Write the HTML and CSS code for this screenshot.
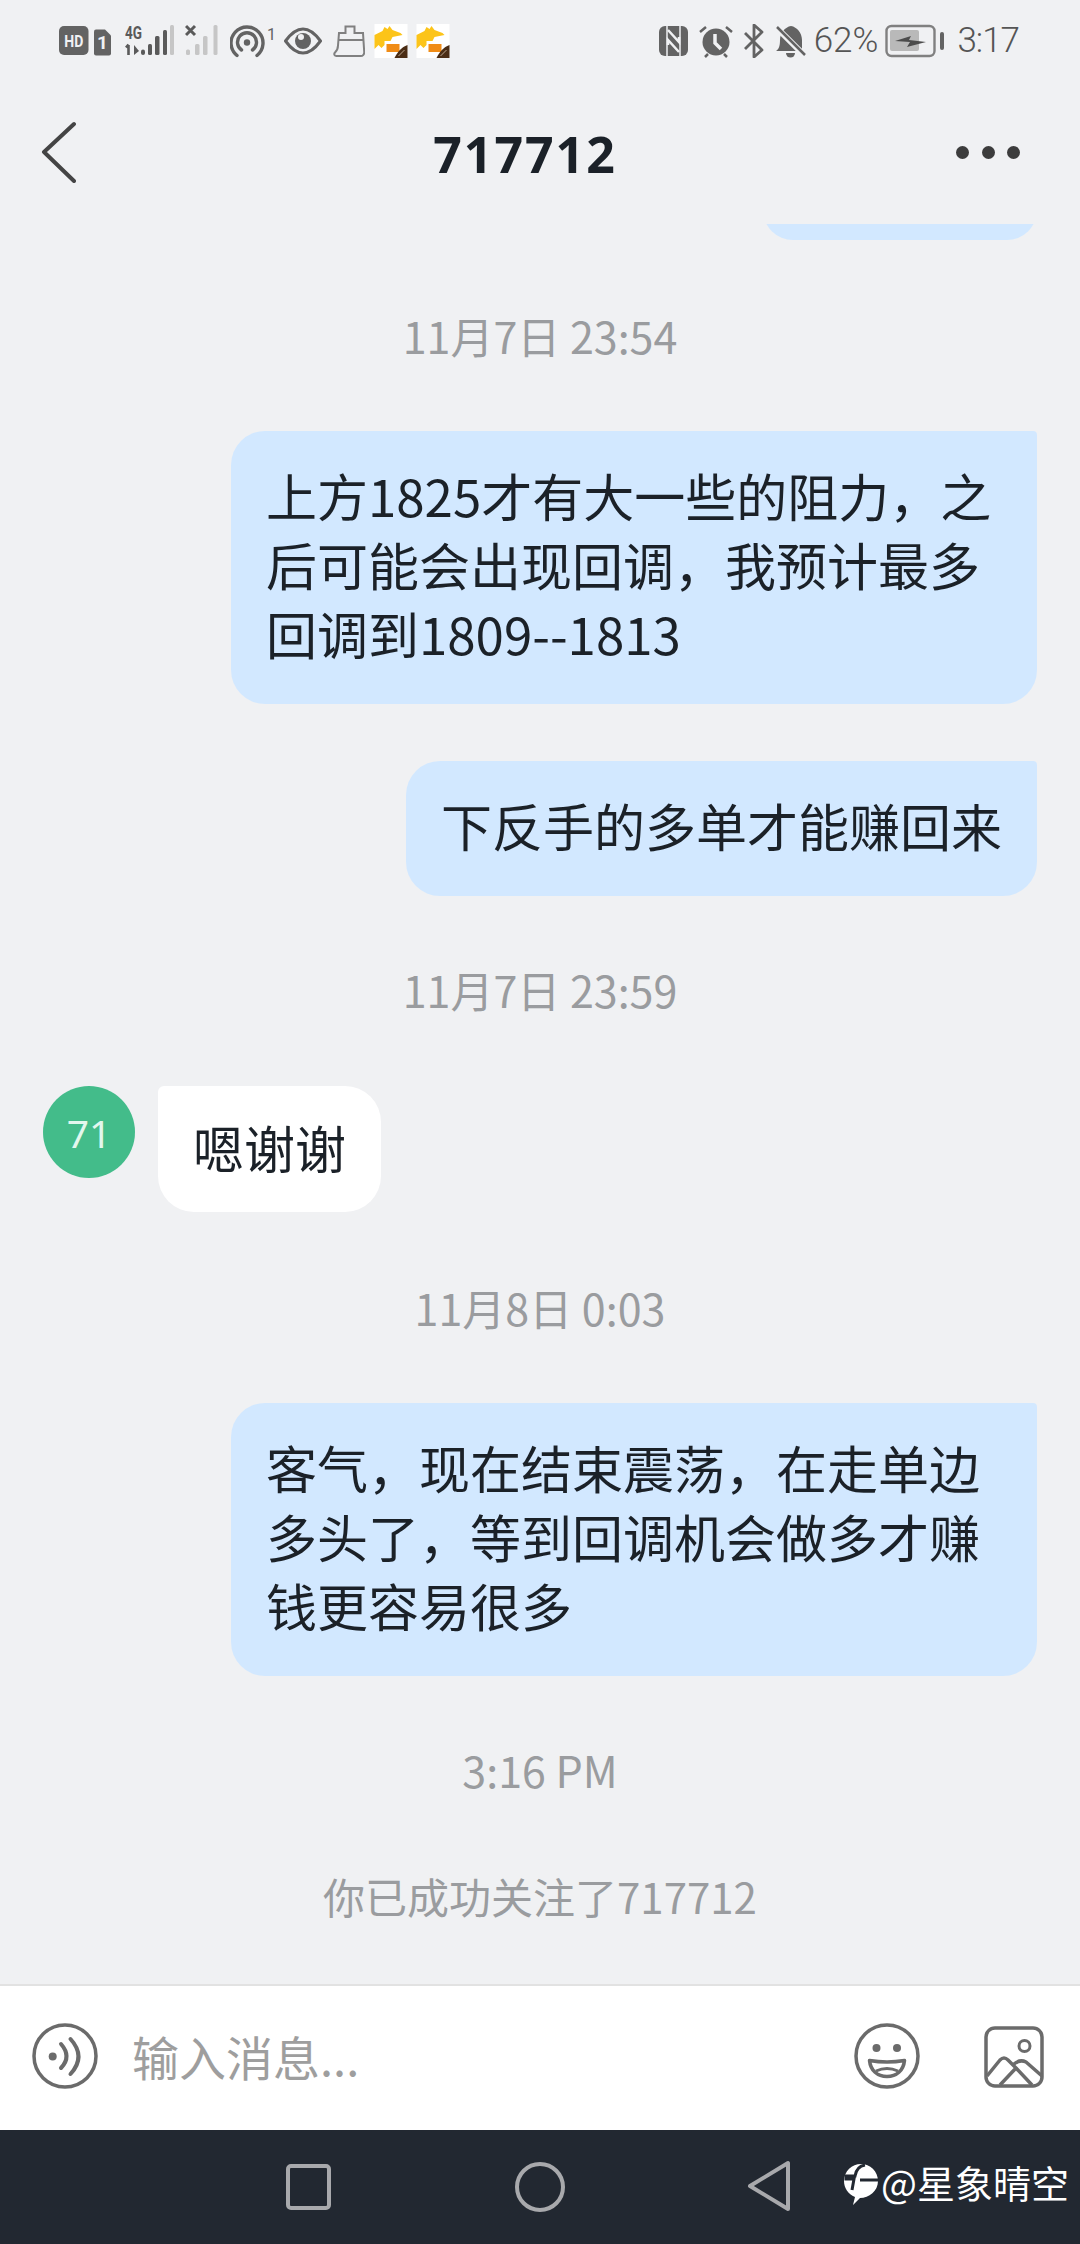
FILE: index.html
```html
<!DOCTYPE html>
<html>
<head>
	<meta charset="utf-8">
	<title>717712</title>
	<link rel="stylesheet" href="styles.css">
</head>
<body>
<div class="phone">

	<div class="status">
		<div class="status-left">
			<svg class="ic" width="52" height="34" viewBox="0 0 52 34"><rect x="0" y="2" width="29.500" height="29" rx="5" fill="#636363"/><text x="14.800" y="22.500" class="hd" textLength="19" lengthAdjust="spacingAndGlyphs">HD</text><path d="M37 5.500h9l6 6v18a2 2 0 0 1-2 2H37a2 2 0 0 1-2-2v-22a2 2 0 0 1 2-2z" fill="#636363"/><text x="43.500" y="25" class="sim">1</text></svg>
			<svg class="ic gap1" width="49" height="42" viewBox="0 -8 49 42"><text x="0" y="15" class="net" textLength="17" lengthAdjust="spacingAndGlyphs">4G</text><path d="M3.500 31V21M1 23.500l2.500-3" stroke="#5a5a5a" stroke-width="2.600" fill="none"/><path d="M9 21v10l5-4z" fill="#5a5a5a"/><g fill="#5a5a5a"><rect x="16" y="25.500" width="4" height="5.500" rx="2"/><rect x="23" y="20" width="4" height="11" rx="1.500"/><rect x="30" y="12" width="4.500" height="19" rx="1.500"/><rect x="38" y="6" width="4" height="25" rx="1.500"/></g><rect x="45" y="1" width="4" height="30" rx="1.500" fill="#c6c6c6"/></svg>
			<svg class="ic gap2" width="33" height="34" viewBox="0 0 33 34"><path d="M1 2l9 9M10 2l-9 9" stroke="#5a5a5a" stroke-width="3"/><g fill="#c6c6c6"><rect x="1" y="25.500" width="4" height="5.500" rx="1.500"/><rect x="10" y="20" width="4.500" height="11" rx="1.500"/><rect x="18" y="12" width="4.500" height="19" rx="1.500"/><rect x="28.500" y="1" width="4" height="30" rx="1.500"/></g></svg>
			<svg class="ic gap3" width="49" height="34" viewBox="0 0 49 34"><g fill="none" stroke="#636363" stroke-width="3.400" stroke-linecap="round"><path d="M7 31.500a16 16 0 1 1 20 0"/><path d="M11.500 26a9.500 9.500 0 1 1 11 0"/></g><circle cx="17" cy="18.500" r="3.200" fill="#636363"/><text x="37" y="16" class="tiny">1</text></svg>
			<svg class="ic gap0" width="38" height="28" viewBox="0 0 38 28"><path d="M1.500 14C8 5 13 2 19 2s11 3 17.500 12C30 23 25 26 19 26S8 23 1.500 14z" fill="none" stroke="#636363" stroke-width="3"/><circle cx="19" cy="14" r="8" fill="#636363"/><circle cx="17" cy="10" r="3" fill="#f0f1f3"/></svg>
			<svg class="ic gap4" width="32" height="34" viewBox="0 0 32 34"><path d="M6 9h6.500V2.500h9V9H30l1.200 19a3.500 3.500 0 0 1-3.500 4H3.500c-2 0-3-2-1.500-3.500 2-2 3-4 3-7zM5.500 16h25" fill="none" stroke="#808080" stroke-width="2"/></svg>
			<svg class="ic gap5" width="34" height="34" viewBox="0 0 33 34"><use href="#roo"/></svg>
			<svg class="ic gap6" width="34" height="34" viewBox="0 0 33 34"><use href="#roo"/></svg>
		</div>
		<div class="status-right">
			<svg class="ic" width="29" height="34" viewBox="0 0 29 34"><rect width="29" height="30" y="2" rx="6" fill="#636363"/><path d="M8 2v30M21 2v30" stroke="#f0f1f3" stroke-width="1.500"/><path d="M9 6l11 12v-5M20 28L9 16v5" stroke="#f0f1f3" stroke-width="2.500" fill="none"/></svg>
			<svg class="ic m-alarm" width="34" height="34" viewBox="0 0 34 34"><circle cx="17" cy="18" r="13.500" fill="#636363"/><path d="M16 10v9l6 6" stroke="#f0f1f3" stroke-width="3.500" fill="none"/><path d="M1 8l6-5M33 8l-6-5M6 33l3-3M28 33l-3-3" stroke="#636363" stroke-width="2.500"/></svg>
			<svg class="ic m-bt" width="22" height="34" viewBox="0 0 22 34"><path d="M2 9l17 17-8 7V1l8 7L2 25" fill="none" stroke="#636363" stroke-width="2.800" stroke-linejoin="round"/></svg>
			<svg class="ic m-bell" width="30" height="34" viewBox="0 0 30 34"><path d="M0 27c3-2 4-5 4-11 0-7 5-13 11-14 6 1 11 7 11 14v11z" fill="#636363"/><path d="M10 29h9a4.500 4.500 0 0 1-9 0z" fill="#636363"/><path d="M1 4l28 28" stroke="#f0f1f3" stroke-width="6"/><path d="M1 3l28 28" stroke="#636363" stroke-width="2.500"/></svg>
			<span class="pct">62%</span>
			<svg class="ic batt" width="60" height="34" viewBox="0 0 60 34"><rect x="1.500" y="2" width="48" height="30" rx="5" fill="none" stroke="#808080" stroke-width="2.400"/><rect x="5" y="6" width="29" height="21" rx="2" fill="#b9b9b9"/><path d="M10 17l16-5-2 4 17 2-19 5 3-5z" fill="#4c4c4c"/><rect x="55" y="8" width="4" height="18" rx="2" fill="#636363"/></svg>
			<span class="clock">3:17</span>
		</div>
	</div>

	<div class="topbar">
		<svg class="back" width="36" height="62" viewBox="0 0 36 62"><path d="M34 3L4 31l30 29" fill="none" stroke="#444" stroke-width="4" stroke-linecap="round" stroke-linejoin="round"/></svg>
		<div class="title">717712</div>
		<div class="more"><i></i><i></i><i></i></div>
	</div>

	<div class="messages">
		<div class="stub-clip"><div class="stub"></div></div>

		<div class="time t1">11月7日 23:54</div>
		<div class="row-me r1"><div class="bubble me wide">上方1825才有大一些的阻力，之后可能会出现回调，我预计最多回调到1809--1813</div></div>
		<div class="row-me r2"><div class="bubble me">下反手的多单才能赚回来</div></div>

		<div class="time t2">11月7日 23:59</div>
		<div class="row-them">
			<div class="avatar">71</div>
			<div class="bubble them">嗯谢谢</div>
		</div>

		<div class="time t3">11月8日 0:03</div>
		<div class="row-me r1"><div class="bubble me wide">客气，现在结束震荡，在走单边多头了，等到回调机会做多才赚钱更容易很多</div></div>

		<div class="time t4">3:16 PM</div>
		<div class="notice">你已成功关注了717712</div>
	</div>

	<div class="inputbar">
		<svg class="voice" width="66" height="66" viewBox="0 0 66 66"><circle cx="33" cy="33" r="31" fill="none" stroke="#6b6b6b" stroke-width="3.500"/><circle cx="20.700" cy="33.500" r="4" fill="#6b6b6b"/><g fill="none" stroke="#6b6b6b" stroke-width="4" stroke-linecap="round"><path d="M29 21q11 12.500 0 24"/><path d="M38.500 16q16 17.500 0 35"/></g></svg>
		<div class="placeholder">输入消息...</div>
		<svg class="smile" width="66" height="66" viewBox="0 0 66 66"><circle cx="33" cy="33" r="31" fill="none" stroke="#6b6b6b" stroke-width="3.500"/><circle cx="22.500" cy="25" r="4" fill="#6b6b6b"/><circle cx="43" cy="25" r="4" fill="#6b6b6b"/><path d="M15.500 37.500q17.500 3 35 0c-1 10-8 16-17.500 16s-16.500-6-17.500-16z" fill="none" stroke="#6b6b6b" stroke-width="3.500" stroke-linejoin="round"/><path d="M22 48q11-5 22 0" fill="none" stroke="#6b6b6b" stroke-width="3"/></svg>
		<svg class="pic" width="60" height="62" viewBox="0 0 60 62"><rect x="2" y="2" width="56" height="58" rx="9" fill="none" stroke="#6b6b6b" stroke-width="3.500"/><circle cx="40.500" cy="20" r="5.500" fill="none" stroke="#6b6b6b" stroke-width="3"/><path d="M3 50l13-16q4-4 8 0l8 8M16 59l16-17 16 17M30 38q6-5 12-2l16 14" fill="none" stroke="#6b6b6b" stroke-width="3.500" stroke-linejoin="round"/></svg>
	</div>

	<div class="navbar">
		<svg class="nav-square" width="45" height="46" viewBox="0 0 45 46"><rect x="2" y="2" width="41" height="42" rx="3" fill="none" stroke="#a8a9ac" stroke-width="4"/></svg>
		<svg class="nav-circle" width="50" height="50" viewBox="0 0 50 50"><circle cx="25" cy="25" r="23" fill="none" stroke="#a8a9ac" stroke-width="4"/></svg>
		<svg class="nav-back" width="44" height="52" viewBox="0 0 44 52"><path d="M41 3v46L3 26z" fill="none" stroke="#a8a9ac" stroke-width="4" stroke-linejoin="round"/></svg>
		<div class="mark">
			<svg width="36" height="44" viewBox="0 0 36 44"><path d="M18 2c9 0 17 7 17 17s-9 17-18 17L10 43l2-8C5 32 1 26 1 19 1 9 9 2 18 2z" fill="#fff"/><path d="M22 3c-6 1-9 5-10 11H3v3h8l-2 11M17 18h18" fill="none" stroke="#222831" stroke-width="3"/></svg>
			<span>@星象晴空</span>
		</div>
	</div>

</div>

<svg width="0" height="0" class="defs"><defs><g id="roo"><rect width="33" height="34" fill="#fff"/><path d="M0 11l8-4 2-4 3 2 2-3 3 4 8 3 2 2-10 2-2 4h-6v4l-3 3-3-3-4 4z" fill="#fcc419"/><rect x="12" y="20" width="13" height="8" fill="#f08c16"/><path d="M33 21v13H20c3-6 7-11 13-13z" fill="#4a2c14"/><path d="M24 32l6-6" stroke="#b9a58e" stroke-width="1"/></g></defs></svg>
</body>
</html>
```

FILE: styles.css
```css
* {box-sizing:border-box;}
html, body {margin:0;padding:0;}
body {font-family:"Noto Sans CJK SC","Noto Sans",sans-serif;background:#f0f1f3;}
.defs {position:absolute;}
.phone {width:1080px;height:2244px;display:flex;flex-direction:column;background:#f0f1f3;color:#1b2128;overflow:hidden;}
.ic {display:block;flex:none;}

.status {height:80px;padding:24px 61px 0 59px;display:flex;justify-content:space-between;align-items:flex-start;}
.status-left {display:flex;align-items:center;height:34px;}
.status-right {display:flex;align-items:center;height:34px;}
.gap1 {margin-left:14px;margin-top:-8px;}
.gap2 {margin-left:11px;}
.gap3 {margin-left:12px;}
.gap0 {margin-left:5px;}
.gap4 {margin-left:11px;}
.gap5 {margin-left:9px;}
.gap6 {margin-left:8px;}
.m-alarm {margin-left:11px;}
.m-bt {margin-left:10px;}
.m-bell {margin-left:11px;}
.hd {font:bold 17px "Roboto";fill:#f0f1f3;text-anchor:middle;}
.sim {font:bold 19px "Roboto";fill:#f0f1f3;text-anchor:middle;}
.net {font:bold 18px "Roboto";fill:#5a5a5a;}
.tiny {font:16px "Roboto";fill:#636363;}
.pct, .clock {font:300 35px "Roboto",sans-serif;color:#555;line-height:34px;}
.pct {margin-left:8px;}
.clock {margin-left:12px;letter-spacing:-1px;}
.batt {margin-left:7px;}

.topbar {height:144px;padding:0 60px 0 40px;display:flex;align-items:center;justify-content:space-between;position:relative;}
.back {display:block;}
.title {font:bold 50px "Noto Sans",sans-serif;letter-spacing:2px;position:absolute;left:0;right:0;top:42px;text-align:center;line-height:64px;padding-right:30px;}
.more {display:flex;gap:12.500px;}
.more i {display:block;width:13px;height:13px;border-radius:50%;background:#3c3c3c;}

.messages {flex:1;display:flex;flex-direction:column;min-height:0;}
.stub-clip {height:16px;flex:none;padding:0 43px 0 763px;overflow:hidden;display:flex;align-items:flex-end;}
.stub {height:60px;flex:1;background:#d2e8ff;border-radius:36px;}
.time {font-size:43px;line-height:54px;padding-bottom:6px;color:#9a9c9f;text-align:center;}
.t1 {margin-top:68px;}
.t2 {margin-top:66px;}
.t3 {margin-top:68px;}
.t4 {margin-top:66px;}
.row-me {display:flex;justify-content:flex-end;padding-right:43px;}
.r1 {margin-top:63px;}
.r2 {margin-top:57px;}
.bubble {font-size:51px;line-height:69px;padding:30px 35px 36px;color:#1b2128;}
.me {background:#d2e8ff;border-radius:34px 4px 34px 34px;}
.wide {width:806px;}
.row-them {display:flex;gap:23px;padding-left:43px;margin-top:64px;align-items:flex-start;}
.avatar {width:92px;height:92px;border-radius:50%;background:#43bc8a;color:#e2f7ee;font-size:39px;display:flex;align-items:center;justify-content:center;font-family:"Noto Sans",sans-serif;}
.them {background:#fff;padding:27px 35px 30px;border-radius:6px 36px 36px 36px;}
.notice {margin-top:65px;font-size:42px;line-height:58px;padding-bottom:2px;color:#9a9c9f;text-align:center;}

.inputbar {height:146px;flex:none;background:#fff;border-top:2px solid #e2e2e2;padding:37px 36px 0 32px;display:flex;align-items:flex-start;}
.voice {display:block;}
.placeholder {font-size:47px;line-height:66px;color:#9e9e9e;margin-left:34px;flex:1;}
.smile {display:block;}
.pic {display:block;margin-left:64px;margin-top:3px;}

.navbar {height:114px;flex:none;background:#222831;position:relative;}
.nav-square {position:absolute;left:286px;top:34px;}
.nav-circle {position:absolute;left:515px;top:32px;}
.nav-back {position:absolute;left:747px;top:30px;}
.mark {position:absolute;left:843px;top:26px;display:flex;align-items:center;color:#fff;font-size:38px;line-height:52px;}
.mark svg {display:block;margin-right:2px;margin-top:4px;}
```
